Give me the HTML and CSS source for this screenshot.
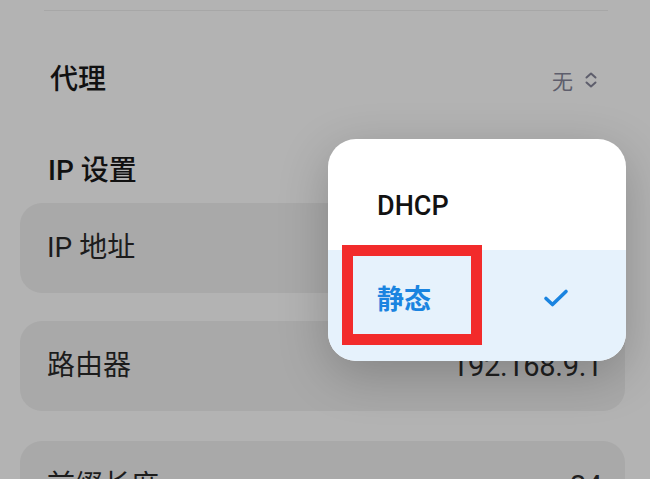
FILE: index.html
```html
<!DOCTYPE html>
<html lang="zh-CN">
<head>
<meta charset="utf-8">
<title>IP 设置</title>
<link rel="stylesheet" href="styles.css">
</head>
<body>
<div class="screen">
  <div class="divider"></div>
  <div class="row proxy">
    <span class="label strong">代理</span>
    <span class="value">无
      <svg class="chev" width="14" height="18" viewBox="0 0 14 18"><path d="M2.5 6.5 L7 2.5 L11.5 6.5 M2.5 11.5 L7 15.5 L11.5 11.5" fill="none" stroke="#5e5e6c" stroke-width="2" stroke-linecap="round" stroke-linejoin="round"/></svg>
    </span>
  </div>
  <div class="section-title">IP 设置</div>
  <div class="card first"><span class="label">IP 地址</span></div>
  <div class="card"><span class="label">路由器</span><span class="num">192.168.9.1</span></div>
  <div class="card"><span class="label">前缀长度</span><span class="num">24</span></div>

  <div class="popup">
    <div class="opt dhcp">DHCP</div>
    <div class="opt selected">
      <span>静态</span>
      <svg class="check" width="26" height="20" viewBox="0 0 26 20"><path d="M3 10.5 L9.5 16.5 L23 3.5" fill="none" stroke="#1a84e0" stroke-width="3.6" stroke-linecap="round" stroke-linejoin="round"/></svg>
    </div>
  </div>
  <div class="mark"></div>
</div>
</body>
</html>
```

FILE: styles.css
```css
html, body {
  margin: 0;
  padding: 0;
}
body {
  width: 650px;
  height: 479px;
  overflow: hidden;
  background: #b3b3b3;
  font-family: Roboto, "Noto Sans CJK SC", sans-serif;
  color: #161616;
}
.screen {
  position: relative;
  padding-top: 10px;
  height: 469px;
}
.divider {
  height: 1px;
  background: #a7a7a7;
  margin: 0 42px 0 44px;
}
.row {
  display: flex;
  justify-content: space-between;
  align-items: center;
}
.proxy {
  padding: 48px 52px 0 50px;
  height: 42px;
}
.label {
  font-size: 28px;
  line-height: 42px;
  font-weight: 400;
  color: #1c1c1c;
}
.label.strong {
  font-weight: 500;
  color: #111111;
}
.value {
  display: flex;
  align-items: center;
  gap: 11px;
  font-size: 21px;
  color: #5e5e6c;
}
.section-title {
  margin: 50px 0 0 48px;
  font-size: 28px;
  line-height: 40px;
  font-weight: 500;
  color: #111111;
}
.card {
  margin: 28px 25px 0 20px;
  height: 90px;
  border-radius: 22px;
  background: #a9a9a9;
  display: flex;
  justify-content: space-between;
  align-items: center;
  padding: 0 23px 0 27px;
}
.card.first {
  margin-top: 12px;
}
.card + .card + .card {
  margin-top: 30px;
}
.num {
  font-size: 29px;
  color: #202020;
  letter-spacing: -0.3px;
}
.popup {
  position: absolute;
  left: 328px;
  top: 139px;
  width: 298px;
  height: 222px;
  border-radius: 28px;
  overflow: hidden;
  background: #ffffff;
  box-shadow: 0 14px 50px rgba(0, 0, 0, 0.22);
}
.opt {
  box-sizing: border-box;
  height: 111px;
  display: flex;
  align-items: center;
  justify-content: space-between;
  padding: 0 57px 0 49px;
  font-size: 27px;
  font-weight: 500;
  color: #121212;
}
.opt.dhcp {
  padding-top: 22px;
}
.opt.selected {
  padding-bottom: 16px;
  background: #e6f2fc;
  color: #1a84e0;
  font-weight: 700;
}
.mark {
  position: absolute;
  left: 342px;
  top: 245px;
  width: 140px;
  height: 100px;
  box-sizing: border-box;
  border: 11px solid #f22b2b;
}
```
